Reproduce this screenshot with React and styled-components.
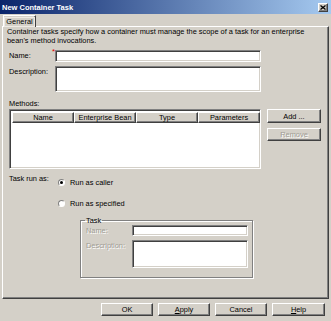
import React, { useState } from 'react'
import styled, { createGlobalStyle } from 'styled-components'

const GlobalStyle = createGlobalStyle`
  html, body {
    margin: 0;
    padding: 0;
    background: #d4d0c8;
  }
  * {
    box-sizing: border-box;
  }
`

const raised = `
  border-top: 1px solid #ffffff;
  border-left: 1px solid #ffffff;
  border-right: 1px solid #404040;
  border-bottom: 1px solid #404040;
  box-shadow: inset -1px -1px 0 #808080;
`

const sunken = `
  border-top: 1px solid #808080;
  border-left: 1px solid #808080;
  border-right: 1px solid #ffffff;
  border-bottom: 1px solid #ffffff;
  box-shadow: inset 1px 1px 0 #404040, inset -1px -1px 0 #d4d0c8;
`

const Window = styled.div`
  width: 331px;
  height: 321px;
  background: #d4d0c8;
  display: flex;
  flex-direction: column;
  font-family: 'Liberation Sans', Arial, sans-serif;
  font-size: 7.4px;
  line-height: 9px;
  color: #000;
  overflow: hidden;
`

const TitleBar = styled.div`
  height: 14px;
  display: flex;
  align-items: center;
  justify-content: space-between;
  padding: 0 3px 0 2px;
  background: linear-gradient(to right, #0a246a, #a6caf0);
  color: #fff;
  font-weight: bold;
  font-size: 7.5px;
`

const CloseButton = styled.div`
  width: 10px;
  height: 9px;
  background: #d4d0c8;
  ${raised}
  display: flex;
  align-items: center;
  justify-content: center;
`

const TabStrip = styled.div`
  height: 12px;
  display: flex;
  align-items: flex-end;
  padding-left: 3px;
`

const Tab = styled.div`
  height: 12px;
  width: 33px;
  border-top: 1px solid #fff;
  border-left: 1px solid #fff;
  border-right: 1px solid #404040;
  box-shadow: inset -1px 0 0 #808080;
  display: flex;
  align-items: center;
  justify-content: center;
  margin-bottom: -1px;
  background: #d4d0c8;
  position: relative;
  z-index: 1;
`

const TabLabel = styled.span`
  outline: 1px solid #eeeae4;
  padding: 0 1px;
  line-height: 8px;
`

const Panel = styled.div`
  height: 273px;
  margin: 0 2px;
  border-top: 1px solid #fff;
  border-left: 1px solid #fff;
  border-right: 1px solid #404040;
  border-bottom: 1px solid #404040;
  box-shadow: inset -1px -1px 0 #808080;
  display: flex;
  flex-direction: column;
`

const Intro = styled.p`
  margin: 0 0 0 4px;
  width: 318px;
`

const FieldRow = styled.div`
  display: flex;
  margin: ${(p) => p.$top || 0}px 0 0 ${(p) => p.$left || 6}px;
`

const Label = styled.div`
  width: ${(p) => p.$width}px;
  color: ${(p) => (p.$disabled ? '#a09c94' : '#000')};
  text-shadow: ${(p) => (p.$disabled ? '1px 1px 0 #fff' : 'none')};
  position: relative;
  padding-top: ${(p) => p.$pad || 1}px;
`

const Required = styled.span`
  position: absolute;
  right: 0;
  top: -3px;
  color: #e00000;
  font-size: 8px;
`

const TextBox = styled.div`
  width: ${(p) => p.$width}px;
  height: ${(p) => p.$height}px;
  background: #fff;
  ${sunken}
`

const MethodsRow = styled.div`
  display: flex;
  margin: 1px 0 0 6px;
`

const Table = styled.div`
  width: 252px;
  height: 60px;
  background: #fff;
  ${sunken}
  padding: 2px;
  display: flex;
  flex-direction: column;
`

const TableHeader = styled.div`
  display: grid;
  grid-template-columns: 62px 62px 62px 62px;
  height: 11px;
`

const HeaderCell = styled.div`
  background: #d4d0c8;
  ${raised}
  display: flex;
  align-items: center;
  justify-content: center;
  line-height: 8px;
  white-space: nowrap;
`

const ButtonColumn = styled.div`
  display: flex;
  flex-direction: column;
  gap: 5px;
  margin-left: 6px;
`

const Button = styled.div`
  width: ${(p) => p.$width || 54}px;
  height: ${(p) => p.$height || 14}px;
  background: #d4d0c8;
  ${raised}
  display: flex;
  align-items: center;
  justify-content: center;
  color: ${(p) => (p.$disabled ? '#a09c94' : '#000')};
  text-shadow: ${(p) => (p.$disabled ? '1px 1px 0 #fff' : 'none')};
`

const RunAsRow = styled.div`
  display: flex;
  margin: 4px 0 0 6px;
`

const RadioColumn = styled.div`
  display: flex;
  flex-direction: column;
  gap: 12px;
  padding-top: 5px;
`

const RadioRow = styled.label`
  display: flex;
  align-items: center;
  gap: 5px;
  height: 9px;
`

const RadioDot = styled.span`
  width: 7px;
  height: 7px;
  border-radius: 50%;
  background: #fff;
  border: 1px solid;
  border-color: #808080 #fff #fff #808080;
  display: flex;
  align-items: center;
  justify-content: center;
  &::after {
    content: '';
    width: 3px;
    height: 3px;
    border-radius: 50%;
    background: ${(p) => (p.$checked ? '#000' : 'transparent')};
  }
`

const GroupBox = styled.fieldset`
  margin: 8px 0 0 22px;
  width: 173px;
  height: 62px;
  border: 1px solid #808080;
  box-shadow: 1px 1px 0 #fff, inset 1px 1px 0 #fff;
  padding: 0 4px 0 5px;
  display: flex;
  flex-direction: column;
  gap: 4px;
`

const Legend = styled.legend`
  padding: 0 1px;
  margin-left: -1px;
  line-height: 9px;
`

const GroupRow = styled.div`
  display: flex;
`

const Footer = styled.div`
  display: flex;
  justify-content: flex-end;
  gap: 5px;
  padding: 4px 6px 0 0;
`

const Under = styled.span`
  text-decoration: underline;
`

const columns = ['Name', 'Enterprise Bean', 'Type', 'Parameters']

const App = () => {
  const [runAs, setRunAs] = useState('caller')

  return (
    <>
      <GlobalStyle />
      <Window>
        <TitleBar>
          <span>New Container Task</span>
          <CloseButton>
            <svg width="6" height="5" viewBox="0 0 6 5">
              <path d="M0.5 0.5 L5.5 4.5 M5.5 0.5 L0.5 4.5" stroke="#000" strokeWidth="1.3" />
            </svg>
          </CloseButton>
        </TitleBar>
        <TabStrip>
          <Tab>
            <TabLabel>General</TabLabel>
          </Tab>
        </TabStrip>
        <Panel>
          <Intro>
            Container tasks specify how a container must manage the scope of a
            task for an enterprise bean's method invocations.
          </Intro>
          <FieldRow $top={5}>
            <Label $width={46}>
              Name:
              <Required>*</Required>
            </Label>
            <TextBox $width={206} $height={12} />
          </FieldRow>
          <FieldRow $top={4}>
            <Label $width={46}>Description:</Label>
            <TextBox $width={206} $height={26} />
          </FieldRow>
          <FieldRow $top={6}>
            <Label $width={60}>Methods:</Label>
          </FieldRow>
          <MethodsRow>
            <Table>
              <TableHeader>
                {columns.map((c) => (
                  <HeaderCell key={c}>{c}</HeaderCell>
                ))}
              </TableHeader>
            </Table>
            <ButtonColumn>
              <Button>Add ...</Button>
              <Button $disabled $height={13}>
                Remove
              </Button>
            </ButtonColumn>
          </MethodsRow>
          <RunAsRow>
            <Label $width={49}>Task run as:</Label>
            <div>
              <RadioColumn>
                <RadioRow onClick={() => setRunAs('caller')}>
                  <RadioDot $checked={runAs === 'caller'} />
                  Run as caller
                </RadioRow>
                <RadioRow onClick={() => setRunAs('specified')}>
                  <RadioDot $checked={runAs === 'specified'} />
                  Run as specified
                </RadioRow>
              </RadioColumn>
              <GroupBox>
                <Legend>Task</Legend>
                <GroupRow>
                  <Label $width={46} $disabled>
                    Name:
                  </Label>
                  <TextBox $width={116} $height={11} />
                </GroupRow>
                <GroupRow>
                  <Label $width={46} $disabled>
                    Description:
                  </Label>
                  <TextBox $width={116} $height={28} />
                </GroupRow>
              </GroupBox>
            </div>
          </RunAsRow>
        </Panel>
        <Footer>
          <Button $width={52} $height={13}>
            OK
          </Button>
          <Button $width={52} $height={13}>
            <Under>A</Under>pply
          </Button>
          <Button $width={52} $height={13}>
            Cancel
          </Button>
          <Button $width={53} $height={13}>
            <Under>H</Under>elp
          </Button>
        </Footer>
      </Window>
    </>
  )
}

export default App
